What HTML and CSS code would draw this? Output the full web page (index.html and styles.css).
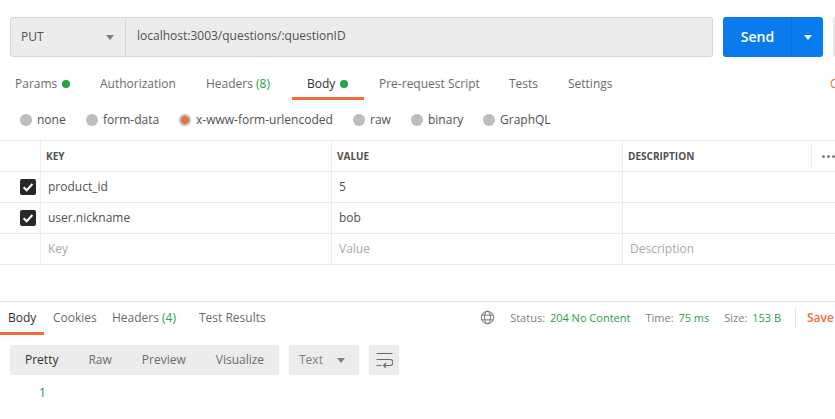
FILE: index.html
```html
<!DOCTYPE html>
<html lang="en">
<head>
<meta charset="utf-8">
<title>PUT request</title>
<link rel="stylesheet" href="styles.css">
</head>
<body>
<div class="app">
  <div class="urlbar">
    <div class="field">
      <div class="method"><span>PUT</span><i class="caret"></i></div>
      <div class="url">localhost:3003/questions/:questionID</div>
    </div>
    <div class="send"><span class="send-label">Send</span><span class="send-more"><i class="caret caret-white"></i></span></div>
    <div class="save-stub"></div>
  </div>

  <div class="tabs">
    <div class="tab tab-params">Params<b class="dot"></b></div>
    <div class="tab tab-auth">Authorization</div>
    <div class="tab tab-headers">Headers <em>(8)</em></div>
    <div class="tab tab-body active">Body<b class="dot"></b></div>
    <div class="tab tab-pre">Pre-request Script</div>
    <div class="tab tab-tests">Tests</div>
    <div class="tab tab-settings">Settings</div>
    <div class="cookies">Cookies</div>
  </div>

  <div class="radios">
    <label class="radio r-none"><i></i>none</label>
    <label class="radio r-form"><i></i>form-data</label>
    <label class="radio r-url on"><i></i>x-www-form-urlencoded</label>
    <label class="radio r-raw"><i></i>raw</label>
    <label class="radio r-bin"><i></i>binary</label>
    <label class="radio"><i></i>GraphQL</label>
  </div>

  <div class="table">
    <div class="row head">
      <div class="c c0"></div><div class="c">KEY</div><div class="c">VALUE</div>
      <div class="c c-desc"><span>DESCRIPTION</span><span class="more"><b></b><b></b><b></b></span></div>
    </div>
    <div class="row">
      <div class="c c0"><svg class="check" viewBox="0 0 16 16"><rect width="16" height="16" rx="2" fill="#282828"/><path d="M3.6 8.2 6.7 11.2 12.4 5" fill="none" stroke="#fff" stroke-width="2"/></svg></div>
      <div class="c val">product_id</div><div class="c val">5</div><div class="c val"></div>
    </div>
    <div class="row">
      <div class="c c0"><svg class="check" viewBox="0 0 16 16"><rect width="16" height="16" rx="2" fill="#282828"/><path d="M3.6 8.2 6.7 11.2 12.4 5" fill="none" stroke="#fff" stroke-width="2"/></svg></div>
      <div class="c val">user.nickname</div><div class="c val">bob</div><div class="c val"></div>
    </div>
    <div class="row">
      <div class="c c0"></div><div class="c val ph">Key</div><div class="c val ph">Value</div><div class="c val ph">Description</div>
    </div>
  </div>

  <div class="response">
    <div class="rtabs">
      <div class="rtab rt-body active">Body</div>
      <div class="rtab rt-cookies">Cookies</div>
      <div class="rtab rt-headers">Headers <em>(4)</em></div>
      <div class="rtab">Test Results</div>
      <div class="meta">
        <svg class="globe" viewBox="0 0 16 16" fill="none" stroke="#6b6b6b" stroke-width="1"><circle cx="8" cy="8" r="6.6"/><ellipse cx="8" cy="8" rx="3.2" ry="6.6"/><path d="M2 5.5H14M2 10.5H14"/></svg>
        <span class="m m-status">Status: <em>204 No Content</em></span>
        <span class="m m-time">Time: <em>75 ms</em></span>
        <span class="m m-size">Size: <em>153 B</em></span>
        <span class="save">Save</span>
      </div>
    </div>
    <div class="toolbar">
      <div class="seg">
        <span class="active">Pretty</span><span>Raw</span><span>Preview</span><span>Visualize</span>
      </div>
      <div class="select">Text<i class="caret"></i></div>
      <div class="wrap">
        <svg viewBox="0 0 17 16" fill="none" stroke="#6b6b6b" stroke-width="1.2"><path d="M0.5 1.5H16.5M0.5 7.5H14A3 3 0 0 1 14 13.5H8M0.5 13.5H5.5"/><path d="M10 11 7.5 13.5 10 16"/></svg>
      </div>
    </div>
    <div class="code">1</div>
  </div>
</div>
</body>
</html>
```

FILE: styles.css
```css
* { box-sizing: border-box; }
html, body { margin: 0; padding: 0; background: #fff; }
body { width: 835px; height: 419px; overflow: hidden; font: 12px/16px "Open Sans", sans-serif; color: #6b6b6b; }
em { font-style: normal; color: #26a148; }
.app { display: flex; flex-direction: column; width: 835px; overflow: hidden; }

.urlbar { display: flex; padding: 17px 0 0 10px; height: 57px; flex: none; }
.field { display: flex; width: 703px; height: 40px; background: #ececec; border: 1px solid #d6d6d6; border-radius: 3px; flex: none; }
.method { width: 115px; flex: none; display: flex; align-items: center; justify-content: space-between; padding: 0 11px 0 10px; border-right: 1px solid #d6d6d6; color: #505050; }
.url { padding-left: 11px; line-height: 36px; color: #505050; }
.caret { display: block; width: 0; height: 0; border-left: 4px solid transparent; border-right: 4px solid transparent; border-top: 5px solid #808080; }
.caret-white { border-top-color: #fff; }
.send { display: flex; width: 100px; height: 40px; margin-left: 10px; background: #097bed; border-radius: 3px; color: #fff; flex: none; }
.send-label { width: 69px; text-align: center; font-weight: 600; font-size: 14px; line-height: 40px; padding-left: 1px; border-right: 1px solid #0a6fd4; }
.send-more { flex: 1; display: flex; align-items: center; justify-content: center; }
.save-stub { width: 20px; height: 40px; margin-left: 10px; background: #ececec; border: 1px solid #e2e2e2; border-radius: 3px; flex: none; }

.tabs { display: flex; height: 43px; padding-left: 15px; flex: none; }
.tab { height: 43px; line-height: 54px; white-space: nowrap; color: #6b6b6b; flex: none; }
.tab.active { color: #303030; border-bottom: 3px solid #f26b3a; }
.tab-params { width: 85px; }
.tab-auth { width: 106px; }
.tab-headers { width: 86px; }
.tab-body { width: 72px; padding-left: 15px; margin-right: 15px; }
.tab-pre { width: 130px; }
.tab-tests { width: 59px; }
.tab-settings { width: 262px; }
.cookies { line-height: 54px; color: #f26b3a; flex: none; }
.dot { display: inline-block; width: 8px; height: 8px; margin-left: 5px; border-radius: 50%; background: #26a148; }

.radios { display: flex; height: 40px; padding-left: 20px; align-items: center; flex: none; }
.radio { display: flex; align-items: center; gap: 5px; color: #505050; white-space: nowrap; flex: none; }
.radio i { width: 12px; height: 12px; border-radius: 50%; background: #bdbdbd; flex: none; }
.radio.on i { background: radial-gradient(circle, #f26b3a 0 3.5px, #bdbdbd 4px); }
.r-none { width: 66px; }
.r-form { width: 93px; }
.r-url { width: 174px; }
.r-raw { width: 58px; }
.r-bin { width: 72px; }

.table { border-top: 1px solid #ececec; height: 125px; flex: none; }
.row { display: grid; grid-template-columns: 40px 291px 291px 1fr; height: 31px; border-bottom: 1px solid #ececec; }
.c { border-left: 1px solid #ececec; padding-left: 6px; line-height: 30px; overflow: hidden; white-space: nowrap; }
.c0 { border-left: 0; padding: 0; display: flex; align-items: center; padding-left: 20px; }
.head .c { font-size: 10px; font-weight: 700; color: #505050; padding-left: 5px; }
.head .c0 { padding: 0; }
.c-desc { display: flex; justify-content: space-between; align-items: center; }
.more { display: flex; align-items: center; gap: 2px; height: 22px; width: 24px; padding-left: 10px; border-left: 1px solid #ececec; flex: none; }
.more b { width: 3px; height: 3px; border-radius: 50%; background: #808080; flex: none; }
.check { width: 16px; height: 16px; display: block; }
.val { color: #505050; padding-left: 7px; }
.ph { color: #a9a9a9; }

.response { margin-top: 36px; border-top: 1px solid #e4e4e4; flex: none; }
.rtabs { display: flex; height: 33px; }
.rtab { line-height: 31px; white-space: nowrap; flex: none; }
.rtab.active { color: #303030; border-bottom: 3px solid #f26b3a; height: 33px; }
.rt-body { width: 44px; padding-left: 8px; margin-right: 9px; }
.rt-cookies { width: 59px; }
.rt-headers { width: 87px; }
.meta { display: flex; align-items: center; margin-left: auto; font-size: 11px; height: 31px; }
.globe { width: 15px; height: 15px; margin-right: 15px; }
.m { color: #808080; white-space: nowrap; word-spacing: 1px; }
.m em { word-spacing: 0; margin-left: 1px; }
.m-status { margin-right: 15px; }
.m-time { margin-right: 15px; }
.save { margin-left: 14px; padding-left: 11px; border-left: 1px solid #e4e4e4; height: 20px; line-height: 20px; color: #f26b3a; font-weight: 600; font-size: 12px; width: 40px; overflow: hidden; }

.toolbar { display: flex; gap: 10px; margin: 10px 0 0 10px; height: 30px; }
.seg { display: flex; width: 269px; background: #ececec; border-radius: 3px; line-height: 30px; padding-left: 15px; }
.seg span { white-space: nowrap; margin-right: 30px; }
.seg .active { color: #303030; }
.select { display: flex; width: 70px; align-items: center; justify-content: space-between; padding: 0 14px 0 10px; background: #ececec; border-radius: 3px; color: #808080; }
.wrap { width: 30px; background: #ececec; border-radius: 3px; display: flex; align-items: center; justify-content: center; }
.wrap svg { width: 17px; height: 16px; }
.code { margin: 10px 0 0 39px; color: #1b80a8; line-height: 16px; }
```
